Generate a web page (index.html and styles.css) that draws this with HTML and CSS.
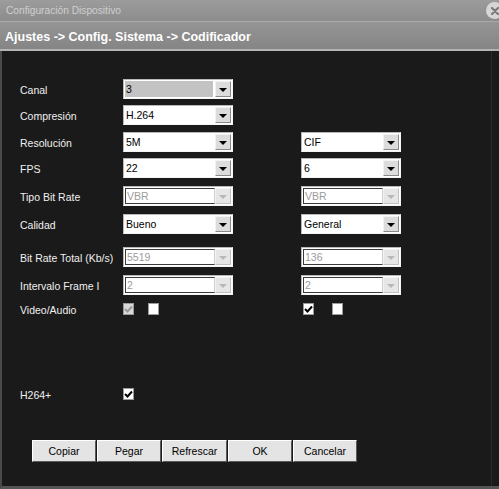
FILE: index.html
```html
<!DOCTYPE html>
<html lang="es">
<head>
<meta charset="utf-8">
<title>Configuración Dispositivo</title>
<link rel="stylesheet" href="styles.css">
</head>
<body>
<div class="window">
  <div class="titlebar">
    <span class="title">Configuración Dispositivo</span>
    <span class="close"><svg width="14" height="14" viewBox="0 0 14 14"><path d="M4 4 L10 10 M10 4 L4 10" stroke="#7a7a7a" stroke-width="2.2" stroke-linecap="round"/></svg></span>
  </div>
  <div class="header">Ajustes -&gt; Config. Sistema -&gt; Codificador</div>
  <div class="body">
    <div class="content">
      <div class="form">
        <div class="lbl">Canal</div>
        <div class="sel"><span class="val hl">3</span><span class="arr"><i></i></span></div>
        <div></div><div></div>

        <div class="lbl">Compresión</div>
        <div class="sel"><span class="val">H.264</span><span class="arr"><i></i></span></div>
        <div></div><div></div>

        <div class="lbl">Resolución</div>
        <div class="sel"><span class="val">5M</span><span class="arr"><i></i></span></div>
        <div></div>
        <div class="sel r"><span class="val">CIF</span><span class="arr"><i></i></span></div>

        <div class="lbl">FPS</div>
        <div class="sel"><span class="val">22</span><span class="arr"><i></i></span></div>
        <div></div>
        <div class="sel r"><span class="val">6</span><span class="arr"><i></i></span></div>

        <div class="lbl">Tipo Bit Rate</div>
        <div class="sel dis"><span class="val">VBR</span><span class="arr"><i></i></span></div>
        <div></div>
        <div class="sel r dis"><span class="val">VBR</span><span class="arr"><i></i></span></div>

        <div class="lbl">Calidad</div>
        <div class="sel"><span class="val">Bueno</span><span class="arr"><i></i></span></div>
        <div></div>
        <div class="sel r"><span class="val">General</span><span class="arr"><i></i></span></div>

        <div class="lbl">Bit Rate Total (Kb/s)</div>
        <div class="sel dis"><span class="val">5519</span><span class="arr"><i></i></span></div>
        <div></div>
        <div class="sel r dis"><span class="val">136</span><span class="arr"><i></i></span></div>

        <div class="lbl">Intervalo Frame I</div>
        <div class="sel dis"><span class="val">2</span><span class="arr"><i></i></span></div>
        <div></div>
        <div class="sel r dis"><span class="val">2</span><span class="arr"><i></i></span></div>

        <div class="lbl ck">Video/Audio</div>
        <div class="checks">
          <span class="cb dis on"><svg width="9" height="9" viewBox="0 0 9 9"><path d="M1 4 L3.5 6.5 L8 1.5" stroke="#9a9a9a" stroke-width="2" fill="none"/></svg></span>
          <span class="cb"></span>
        </div>
        <div></div>
        <div class="checks r">
          <span class="cb on"><svg width="9" height="9" viewBox="0 0 9 9"><path d="M1 4 L3.5 6.5 L8 1.5" stroke="#000" stroke-width="2" fill="none"/></svg></span>
          <span class="cb"></span>
        </div>
      </div>

      <div class="form plus">
        <div class="lbl ck">H264+</div>
        <div class="checks">
          <span class="cb on"><svg width="9" height="9" viewBox="0 0 9 9"><path d="M1 4 L3.5 6.5 L8 1.5" stroke="#000" stroke-width="2" fill="none"/></svg></span>
        </div>
      </div>

      <div class="buttons">
        <button class="btn">Copiar</button>
        <button class="btn">Pegar</button>
        <button class="btn w65">Refrescar</button>
        <button class="btn">OK</button>
        <button class="btn">Cancelar</button>
      </div>
    </div>
  </div>
</div>
</body>
</html>
```
FILE: styles.css
```css
* { box-sizing: border-box; }
html, body { margin: 0; padding: 0; background: #1a1a1a; }
body { font-family: "Liberation Sans", Arial, sans-serif; }

.window {
  width: 499px;
  height: 489px;
  display: flex;
  flex-direction: column;
  overflow: hidden;
}

.titlebar {
  height: 22px;
  flex: none;
  display: flex;
  align-items: center;
  justify-content: space-between;
  background: linear-gradient(#9c9c9c, #8c8c8c);
  border-bottom: 1px solid #a9a9a9;
  padding-left: 6px;
}
.title {
  color: #cfcfcf;
  font-size: 10.2px;
}
.close {
  width: 17px;
  height: 17px;
  border-radius: 50%;
  background: #d6d6d6;
  display: flex;
  align-items: center;
  justify-content: center;
  transform: translateX(4px);
}

.header {
  height: 29px;
  flex: none;
  background: linear-gradient(#959595, #858585);
  border-bottom: 2px solid #b4b4b4;
  color: #ffffff;
  font-weight: bold;
  font-size: 12.5px;
  padding-left: 5px;
  line-height: 30px;
}

.body {
  flex: 1;
  background: #1a1a1a;
  border-left: 2px solid #4a4a4a;
  border-bottom: 3px solid #555555;
}
.content {
  width: 490px;
  height: 100%;
  border-right: 1px solid #2a2a2a;
  padding-top: 28px;
  padding-left: 18px;
}

.form {
  display: grid;
  grid-template-columns: 103px 110px 68px 100px;
  grid-template-rows: 26px 27px 26px 28px 28px 33px 28px 28px 20px;
  align-items: start;
}
.form.plus {
  grid-template-rows: 20px;
  margin-top: 65px;
}

.lbl {
  color: #f0f0f0;
  font-size: 10.5px;
  line-height: 20px;
  height: 20px;
  padding-top: 1px;
}
.lbl.ck {
  line-height: 13px;
  height: 13px;
  padding-top: 1px;
}

.sel {
  height: 20px;
  width: 110px;
  display: flex;
  border: 1px solid;
  border-color: #b8b8b8 #f4f4f4 #f4f4f4 #b8b8b8;
  background: #ffffff;
  padding: 1px;
}
.sel.r { width: 100px; }
.sel .val {
  flex: 1;
  font-size: 10.5px;
  color: #000;
  line-height: 16px;
  padding-left: 1px;
  background: #fff;
}
.sel .val.hl { background: #c3c3c3; margin-right: 2px; }
.sel .arr {
  width: 16px;
  flex: none;
  background: #dcdcdc;
  border: 1px solid;
  border-color: #f2f2f2 #8a8a8a #8a8a8a #f2f2f2;
  display: flex;
  align-items: center;
  justify-content: center;
}
.sel .arr i {
  width: 0;
  height: 0;
  border-left: 4px solid transparent;
  border-right: 4px solid transparent;
  border-top: 4px solid #000;
  margin-top: 1px;
}
.sel.dis .val {
  color: #9c9c9c;
  border: 1px solid;
  border-color: #3a3a3a #d0d0d0 #3a3a3a #3a3a3a;
  line-height: 14px;
}
.sel.dis .arr { background: #e6e6e6; border-color: #f2f2f2 #c0c0c0 #c0c0c0 #f2f2f2; }
.sel.dis .arr i { border-top-color: #b8b8b8; }

.checks {
  display: flex;
  gap: 14px;
  height: 13px;
}
.cb {
  width: 11px;
  height: 12px;
  background: #ffffff;
  border: 1px solid #9a9a9a;
  display: flex;
  align-items: center;
  justify-content: center;
}
.cb.dis { background: #d8d8d8; }
.checks.r { padding-left: 2px; gap: 18px; }

.buttons {
  display: flex;
  gap: 1px;
  margin-top: 32px;
  margin-left: 12px;
}
.btn {
  width: 64px;
  height: 22px;
  background: #e4e4e4;
  border: 1px solid;
  border-color: #ffffff #5a5a5a #5a5a5a #ffffff;
  font-family: "Liberation Sans", Arial, sans-serif;
  font-size: 10.5px;
  color: #000;
  padding: 0;
}
.btn.w65 { width: 65px; }
```
